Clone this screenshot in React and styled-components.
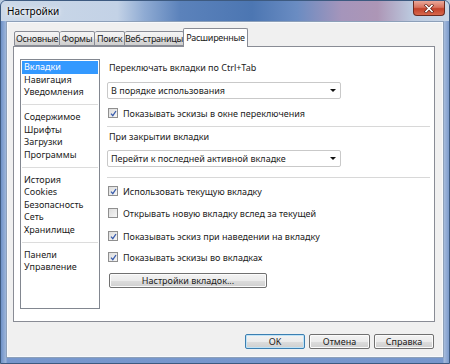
import React from 'react';
import styled, { createGlobalStyle } from 'styled-components';

const GlobalStyle = createGlobalStyle`
    html, body {
        margin: 0;
        padding: 0;
        background: #b9cbe0;
    }
    body {
        font-family: "Noto Sans", "Open Sans", sans-serif;
        font-size: 9px;
        color: #1b1b1b;
    }
`;

const Frame = styled.div`
    width: 450px;
    height: 364px;
    box-sizing: border-box;
    display: flex;
    flex-direction: column;
    background:
        linear-gradient(90deg, #6f92c8 0px, #9db5da 5px, rgba(255,255,255,0) 6px),
        linear-gradient(270deg, #7c9bcc 0px, #a5bbdc 5px, rgba(255,255,255,0) 6px),
        linear-gradient(180deg, #c4d3e6 0%, #a9bfdc 45%, #7696cc 100%);
    border: 1px solid #3d5a80;
    border-radius: 6px 6px 0 0;
    overflow: hidden;
`;

const TitleBar = styled.div`
    height: 20px;
    flex: none;
    display: flex;
    align-items: flex-start;
    padding-left: 6px;
    background: linear-gradient(90deg,
        #cbd8e8 0%, #c3d2e6 26%, #8fabd3 32%, #5b82bb 40%,
        #4c76b2 56%, #6a8cc2 66%, #a595bb 76%, #ad96b6 84%,
        #bccbe0 92%, #c9d6e7 100%);
`;

const Title = styled.span`
    font-size: 10px;
    line-height: 20px;
    color: #000;
    text-shadow: 0 0 6px #fff, 0 0 3px #fff;
`;

const CloseButton = styled.div`
    margin-left: auto;
    margin-right: 4px;
    width: 32px;
    height: 15px;
    box-sizing: border-box;
    border: 1px solid #6b2a20;
    border-top: none;
    border-radius: 0 0 4px 4px;
    background: linear-gradient(180deg, #eaa89a 0%, #d8735f 45%, #c2412a 55%, #d7674c 100%);
    display: flex;
    align-items: center;
    justify-content: center;
`;

const Client = styled.div`
    flex: 1;
    margin: 0 5px 5px 5px;
    background: #f0f0f0;
    border: 1px solid #8da0b9;
    box-shadow: inset 0 0 0 1px #f7f9fc;
    display: flex;
    flex-direction: column;
    padding: 6px 8px 8px 6px;
    min-height: 0;
`;

const TabStrip = styled.div`
    height: 18px;
    display: flex;
    align-items: flex-end;
    padding-left: 1px;
    position: relative;
    z-index: 1;
`;

const Tab = styled.div`
    width: ${p => p.$w}px;
    height: ${p => (p.$active ? 19 : 15)}px;
    box-sizing: border-box;
    margin-bottom: ${p => (p.$active ? -1 : 0)}px;
    margin-left: ${p => (p.$active ? -1 : 0)}px;
    border: 1px solid #898c95;
    border-bottom: ${p => (p.$active ? 'none' : '1px solid #898c95')};
    border-left: ${p => (p.$first || p.$active ? '1px solid #898c95' : 'none')};
    border-radius: 2px 2px 0 0;
    background: ${p => (p.$active ? '#fff' : 'linear-gradient(180deg, #f5f5f5 0%, #ebebeb 50%, #dddddd 51%, #cfcfcf 100%)')};
    display: flex;
    align-items: ${p => (p.$active ? 'flex-start' : 'center')};
    padding-top: ${p => (p.$active ? 2 : 0)}px;
    justify-content: center;
    white-space: nowrap;
    letter-spacing: -0.3px;
    overflow: hidden;
`;

const Panel = styled.div`
    height: 277px;
    box-sizing: border-box;
    border: 1px solid #898c95;
    background: #fff;
    display: flex;
    gap: 7px;
    padding: 12px 4px 12px 6px;
`;

const List = styled.div`
    width: 80px;
    box-sizing: border-box;
    border: 1px solid #828790;
    padding: 1px 1px 0 1px;
    display: flex;
    flex-direction: column;
`;

const ListItem = styled.div`
    height: 12.5px;
    line-height: 12.5px;
    padding-left: 2px;
    white-space: nowrap;
    background: ${p => (p.$selected ? '#3399ff' : 'transparent')};
    color: ${p => (p.$selected ? '#fff' : '#1b1b1b')};
`;

const ListSep = styled.div`
    height: 12.5px;
    display: flex;
    align-items: center;
    &::after {
        content: '';
        flex: 1;
        height: 1px;
        background: #dcdcdc;
    }
`;

const Content = styled.div`
    flex: 1;
    display: flex;
    flex-direction: column;
`;

const Label = styled.div`
    height: 14px;
    line-height: 14px;
    margin-top: ${p => p.$mt || 0}px;
    padding-left: 2px;
    white-space: nowrap;
`;

const Select = styled.div`
    width: 234px;
    height: 17px;
    box-sizing: border-box;
    margin-top: ${p => p.$mt || 0}px;
    border: 1px solid #c9c9c9;
    border-radius: 2px;
    background: #fff;
    display: flex;
    align-items: center;
    padding: 0 4px 0 3px;
    white-space: nowrap;
`;

const Arrow = styled.span`
    margin-left: auto;
    width: 0;
    height: 0;
    border-left: 3px solid transparent;
    border-right: 3px solid transparent;
    border-top: 3px solid #111;
`;

const Separator = styled.div`
    height: 1px;
    margin-top: ${p => p.$mt || 0}px;
    background: #d8d8d8;
`;

const CheckRow = styled.div`
    height: 14px;
    margin-top: ${p => p.$mt || 0}px;
    display: flex;
    align-items: center;
    gap: 5px;
    padding-left: 1px;
    white-space: nowrap;
`;

const Box = styled.span`
    width: 10px;
    height: 10px;
    box-sizing: border-box;
    border: 1px solid #8f8f8f;
    background: linear-gradient(135deg, #dcdcdc 0%, #f6f6f6 100%);
    display: flex;
    align-items: center;
    justify-content: center;
    flex: none;
`;

const Button = styled.div`
    width: ${p => p.$w}px;
    height: 15px;
    box-sizing: border-box;
    margin-top: ${p => p.$mt || 0}px;
    margin-left: ${p => p.$ml || 0}px;
    border: 1px solid ${p => (p.$default ? '#3c7fb1' : '#707070')};
    border-radius: 2px;
    box-shadow: inset 0 0 0 1px ${p => (p.$default ? '#bfe3f7' : '#fbfbfb')};
    background: linear-gradient(180deg, #f3f3f3 0%, #ebebeb 50%, #dddddd 51%, #cfcfcf 100%);
    display: flex;
    align-items: center;
    justify-content: center;
    white-space: nowrap;
    flex: none;
`;

const ButtonRow = styled.div`
    margin-top: 12px;
    display: flex;
    justify-content: flex-end;
    gap: 4px;
    padding-right: 1px;
`;

const Check = ({ checked }) => (
    <Box>
        {checked && (
            <svg width="7" height="7" viewBox="0 0 7 7">
                <path d="M1 3.6 L2.8 5.6 L6 1" fill="none" stroke="#3a5dad" strokeWidth="1.3" />
            </svg>
        )}
    </Box>
);

const tabs = [
    { name: 'Основные', w: 46 },
    { name: 'Формы', w: 35 },
    { name: 'Поиск', w: 30 },
    { name: 'Веб-страницы', w: 59 },
    { name: 'Расширенные', w: 65, active: true },
];

const groups = [
    ['Вкладки', 'Навигация', 'Уведомления'],
    ['Содержимое', 'Шрифты', 'Загрузки', 'Программы'],
    ['История', 'Cookies', 'Безопасность', 'Сеть', 'Хранилище'],
    ['Панели', 'Управление'],
];

export default function App() {
    return (
        <>
            <GlobalStyle />
            <Frame>
                <TitleBar>
                    <Title>Настройки</Title>
                    <CloseButton>
                        <svg width="10" height="9" viewBox="0 0 10 9">
                            <path d="M2 1.5 L8 7.5 M8 1.5 L2 7.5" stroke="#5a1d14" strokeWidth="3" strokeLinecap="square" />
                            <path d="M2 1.5 L8 7.5 M8 1.5 L2 7.5" stroke="#fff" strokeWidth="1.6" strokeLinecap="square" />
                        </svg>
                    </CloseButton>
                </TitleBar>
                <Client>
                    <TabStrip>
                        {tabs.map((t, i) => (
                            <Tab key={t.name} $w={t.w} $active={t.active} $first={i === 0}>{t.name}</Tab>
                        ))}
                    </TabStrip>
                    <Panel>
                        <List>
                            {groups.map((g, gi) => (
                                <React.Fragment key={gi}>
                                    {gi > 0 && <ListSep />}
                                    {g.map(item => (
                                        <ListItem key={item} $selected={item === 'Вкладки'}>{item}</ListItem>
                                    ))}
                                </React.Fragment>
                            ))}
                        </List>
                        <Content>
                            <Label $mt={2}>Переключать вкладки по Ctrl+Tab</Label>
                            <Select $mt={7}>В порядке использования<Arrow /></Select>
                            <CheckRow $mt={7}><Check checked />Показывать эскизы в окне переключения</CheckRow>
                            <Separator $mt={6} />
                            <Label $mt={3}>При закрытии вкладки</Label>
                            <Select $mt={6}>Перейти к последней активной вкладке<Arrow /></Select>
                            <Separator $mt={10} />
                            <CheckRow $mt={6}><Check checked />Использовать текущую вкладку</CheckRow>
                            <CheckRow $mt={8}><Check />Открывать новую вкладку вслед за текущей</CheckRow>
                            <CheckRow $mt={9}><Check checked />Показывать эскиз при наведении на вкладку</CheckRow>
                            <CheckRow $mt={7}><Check checked />Показывать эскизы во вкладках</CheckRow>
                            <Button $w={158} $mt={9} $ml={2}>Настройки вкладок...</Button>
                        </Content>
                    </Panel>
                    <ButtonRow>
                        <Button $w={60} $default>OK</Button>
                        <Button $w={61}>Отмена</Button>
                        <Button $w={60}>Справка</Button>
                    </ButtonRow>
                </Client>
            </Frame>
        </>
    );
}
